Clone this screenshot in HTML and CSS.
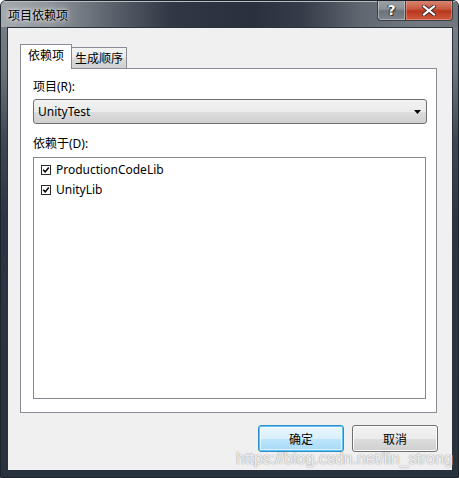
FILE: index.html
```html
<!DOCTYPE html>
<html lang="zh-CN">
<head>
<meta charset="utf-8">
<title>项目依赖项</title>
<link rel="stylesheet" href="styles.css">
</head>
<body>
<div class="window">
  <div class="titlebar">
    <span class="title">项目依赖项</span>
    <div class="caption-btns">
      <div class="cap-btn help">?</div>
      <div class="cap-btn close">
        <svg width="14" height="11" viewBox="0 0 14 11">
          <path d="M2 1.5 L12 9.5 M12 1.5 L2 9.5" stroke="#3a2a28" stroke-width="4" stroke-linecap="square"/>
          <path d="M2 1.5 L12 9.5 M12 1.5 L2 9.5" stroke="#ffffff" stroke-width="2.2" stroke-linecap="square"/>
        </svg>
      </div>
    </div>
  </div>
  <div class="frame-body">
    <div class="client">
      <div class="tabs">
        <div class="tab active">依赖项</div>
        <div class="tab">生成顺序</div>
      </div>
      <div class="panel">
        <div class="label">项目(R):</div>
        <div class="combo">
          <span class="combo-text">UnityTest</span>
          <svg class="combo-arrow" width="7" height="4" viewBox="0 0 7 4"><path d="M0 0 H7 L3.5 4 Z" fill="#000"/></svg>
        </div>
        <div class="label label-dep">依赖于(D):</div>
        <div class="list">
          <div class="item">
            <svg class="cb" width="10" height="10" viewBox="0 0 10 10"><rect x="0.5" y="0.5" width="9" height="9" fill="#fff" stroke="#2a2a2a"/><path d="M2.2 4.8 L4.2 6.9 L7.8 2.6" fill="none" stroke="#000" stroke-width="1.6"/></svg>
            <span>ProductionCodeLib</span>
          </div>
          <div class="item">
            <svg class="cb" width="10" height="10" viewBox="0 0 10 10"><rect x="0.5" y="0.5" width="9" height="9" fill="#fff" stroke="#2a2a2a"/><path d="M2.2 4.8 L4.2 6.9 L7.8 2.6" fill="none" stroke="#000" stroke-width="1.6"/></svg>
            <span>UnityLib</span>
          </div>
        </div>
      </div>
      <div class="buttons">
        <div class="btn default">确定</div>
        <div class="btn">取消</div>
      </div>
    </div>
  </div>
  <div class="watermark">https://blog.csdn.net/lin_strong</div>
</div>
</body>
</html>
```
FILE: styles.css
```css
* { box-sizing: border-box; }
html, body { margin: 0; padding: 0; }
body {
  width: 459px;
  height: 478px;
  background: #ffffff;
  font-family: "Noto Sans", "Noto Sans CJK SC", sans-serif;
  font-size: 12px;
  color: #000;
}
.window {
  position: relative;
  width: 459px;
  height: 478px;
  border: 1px solid #1d232b;
  border-radius: 6px 6px 0 0;
  background: linear-gradient(to bottom, #7d848c 0px, #6b727a 70px, #3d4653 140px, #2b3442 220px, #28313e 100%);
  display: flex;
  flex-direction: column;
  overflow: hidden;
}
.titlebar {
  height: 27px;
  display: flex;
  align-items: flex-start;
  padding-left: 7px;
  border-top: 1px solid #b9bec3;
  background: linear-gradient(to right, #a4a9ae 0px, #8e949a 50px, #5a626c 110px, #2f3844 170px, #28313d 250px, #333c48 300px, #5f6770 360px, #737a82 420px, #6e757c 100%);
}
.title {
  font-family: "Noto Sans CJK SC", sans-serif;
  font-size: 12px;
  line-height: 16px;
  margin-top: 5px;
  color: #000;
  text-shadow: 0 0 6px rgba(255,255,255,0.9), 0 0 3px rgba(255,255,255,0.8);
}
.caption-btns {
  margin-left: auto;
  margin-right: 5px;
  margin-top: -2px;
  display: flex;
}
.cap-btn {
  height: 21px;
  border: 1px solid #3b4047;
  border-top: none;
  display: flex;
  align-items: center;
  justify-content: center;
}
.help {
  width: 28px;
  border-right: none;
  border-radius: 0 0 0 4px;
  background: linear-gradient(to bottom, #9ca2a8 0%, #8a9096 45%, #6b727a 55%, #7d848b 100%);
  box-shadow: inset 0 0 0 1px rgba(255,255,255,0.35);
  color: #fff;
  font-family: "DejaVu Sans", sans-serif;
  font-weight: bold;
  font-size: 14px;
  line-height: 14px;
  text-shadow: 0 0 1px #222, 1px 1px 0 #333, -1px 0 0 #333;
}
.close {
  width: 48px;
  border-radius: 0 0 4px 0;
  background: linear-gradient(to bottom, #d98a78 0%, #c8573f 45%, #b8361c 55%, #cf5a3e 100%);
  box-shadow: inset 0 0 0 1px rgba(255,210,200,0.35);
}
.frame-body {
  flex: 1;
  padding: 0 5px 6px 6px;
}
.client {
  width: 446px;
  height: 444px;
  border: 1px solid #2a323e;
  background: #f0f0f0;
  padding: 16px 14px 0 12px;
}
.tabs {
  display: flex;
  align-items: flex-end;
  height: 24px;
  position: relative;
  z-index: 1;
}
.tab {
  font-family: "Noto Sans CJK SC", sans-serif;
  font-size: 12px;
  height: 21px;
  line-height: 19px;
  width: 55px;
  text-align: center;
  border: 1px solid #898c95;
  border-bottom: none;
  border-left: none;
  background: linear-gradient(to bottom, #f3f3f3 0%, #ebebeb 50%, #dddddd 51%, #cfcfcf 100%);
}
.tab.active {
  width: 52px;
  height: 25px;
  line-height: 20px;
  margin-bottom: -1px;
  border-left: 1px solid #898c95;
  background: #ffffff;
}
.panel {
  width: 417px;
  height: 345px;
  border: 1px solid #898c95;
  background: #ffffff;
  padding: 10px 0 0 12px;
}
.label {
  font-family: "Noto Sans", "Noto Sans CJK SC", sans-serif;
  height: 16px;
  line-height: 16px;
}
.combo {
  margin-top: 4px;
  width: 394px;
  height: 25px;
  border: 1px solid #707070;
  border-radius: 3px;
  background: linear-gradient(to bottom, #f2f2f2 0%, #ebebeb 50%, #dddddd 51%, #cfcfcf 100%);
  display: flex;
  align-items: center;
  padding: 0 5px 0 4px;
}
.combo-text {
  line-height: 16px;
}
.combo-arrow {
  margin-left: auto;
}
.label-dep {
  margin-top: 12px;
}
.list {
  margin-top: 5px;
  width: 393px;
  height: 242px;
  border: 1px solid #828790;
  background: #ffffff;
  padding: 2px 0 0 7px;
}
.item {
  height: 20px;
  display: flex;
  align-items: center;
  gap: 5px;
  line-height: 16px;
}
.cb {
  flex: none;
}
.buttons {
  margin-top: 12px;
  display: flex;
  justify-content: flex-end;
  gap: 8px;
}
.btn {
  width: 86px;
  height: 27px;
  border: 1px solid #707070;
  border-radius: 3px;
  font-family: "Noto Sans CJK SC", sans-serif;
  font-size: 12px;
  line-height: 25px;
  text-align: center;
  background: linear-gradient(to bottom, #f2f2f2 0%, #ebebeb 50%, #dddddd 51%, #cfcfcf 100%);
  box-shadow: inset 0 0 0 1px #fcfcfc;
}
.btn.default {
  border-color: #2c8fcb;
  background: linear-gradient(to bottom, #eaf6fd 0%, #d9f0fc 50%, #bee6fd 51%, #a7d9f5 100%);
  box-shadow: inset 0 0 0 1px #5fc3f0, inset 0 0 0 2px rgba(255,255,255,0.6);
}
.watermark {
  position: absolute;
  left: 235px;
  top: 449px;
  font-family: "Liberation Sans", Arial, sans-serif;
  font-size: 16px;
  line-height: 18px;
  color: rgba(255,255,255,0.85);
  text-shadow: 0 0 1px rgba(90,90,90,0.6), 0 0 2px rgba(120,120,120,0.35);
  white-space: nowrap;
}
```
